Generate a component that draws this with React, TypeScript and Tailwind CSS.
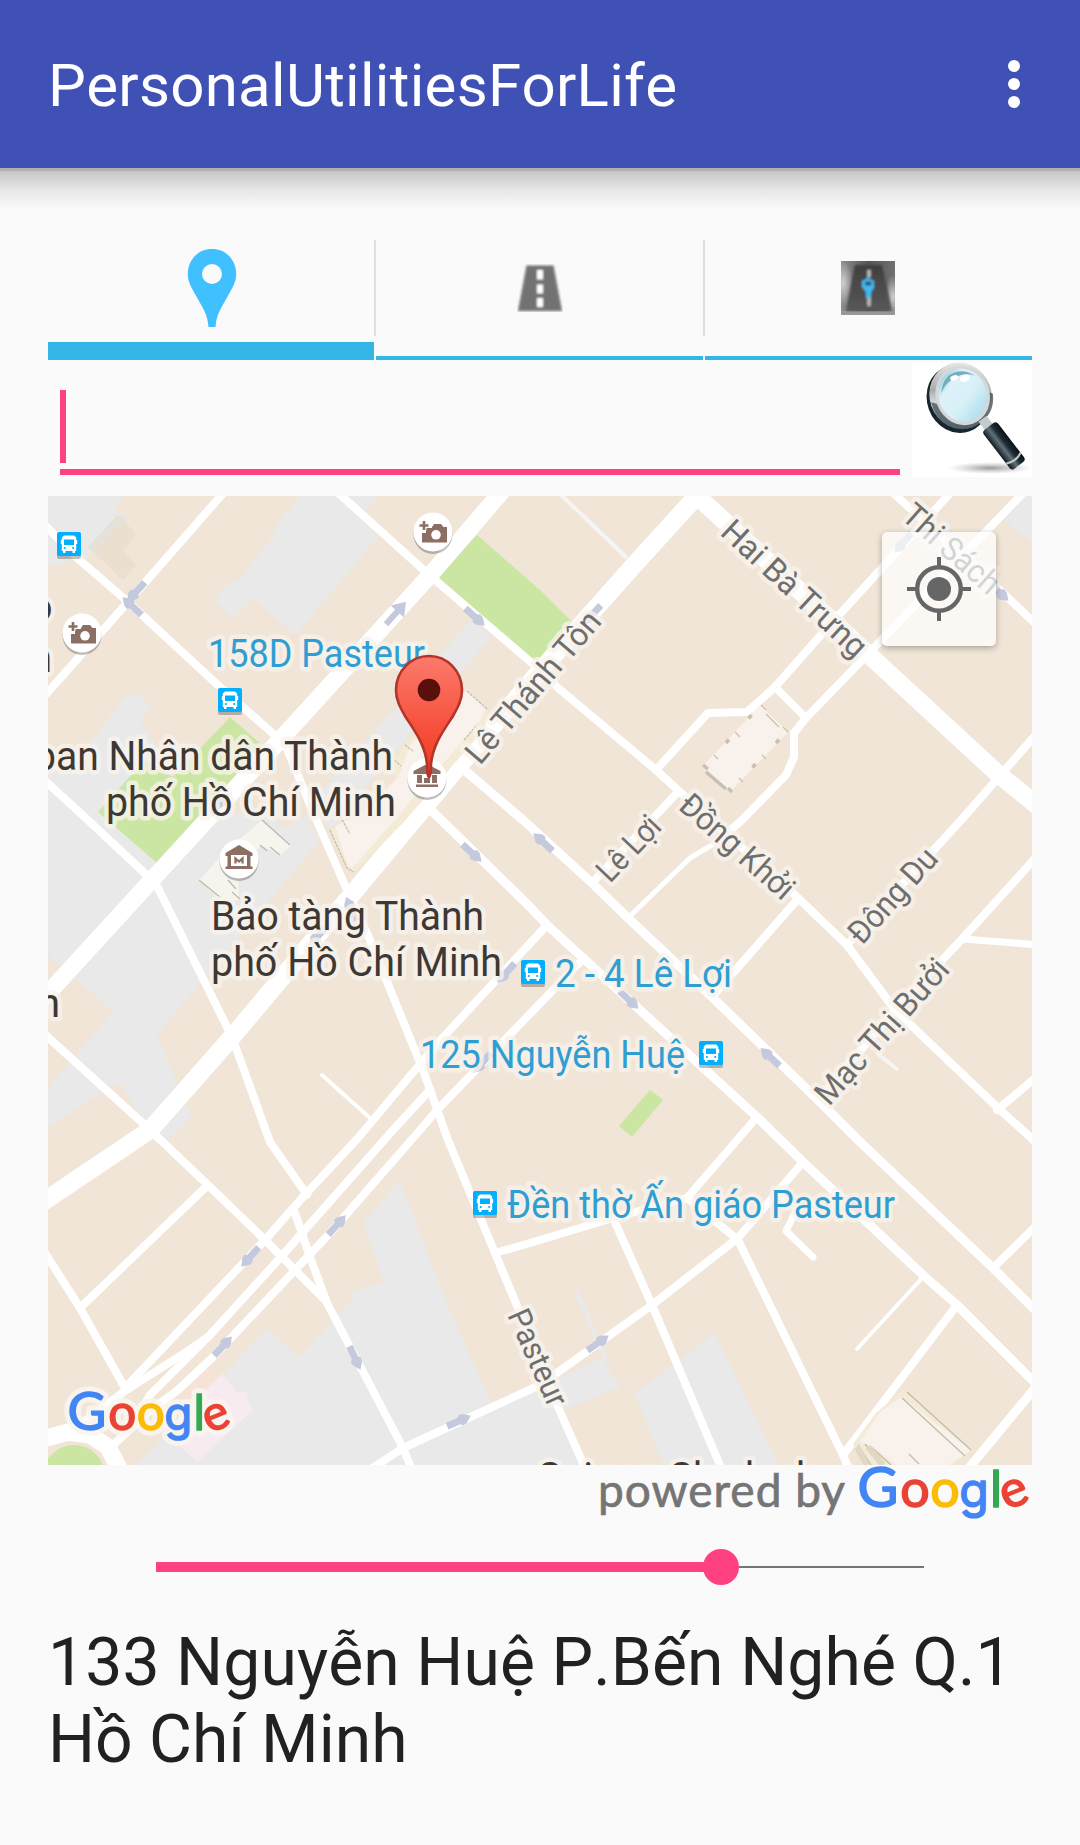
import React from "react";

const WHITE_ROADS: [number, string][] = [
  [8, "226,490 128,602 40,701"],
  [8, "40,520 75,556 128,602 220,687 278,738"],
  [8, "335,490 427,573 540,670 557,687 656,770 680,792 797,897 847,945 895,1010 997,1107 1040,1146"],
  [8, "656,770 708,713 747,712 775,687 820,636 953,490"],
  [8, "775,687 806,718"],
  [8, "1026,490 867,655 806,718 794,733 794,757 786,775 742,820 717,842"],
  [5, "717,842 690,858 628,918"],
  [8, "890,490 1003,593 1040,628"],
  [8, "1040,730 963,818 847,945"],
  [8, "1040,853 963,938 895,1010 818,1100"],
  [7, "963,939 1040,945"],
  [9, "462,768 523,820 592,883 628,918 712,997 818,1100 858,1140 993,1268 1040,1315"],
  [9, "427,806 530,907 547,925 757,1117 803,1162 923,1275 957,1305 1040,1388"],
  [8, "677,793 592,883"],
  [8, "797,900 712,997"],
  [8, "547,925 436,1045 358,1138 303,1197 265,1240 125,1388"],
  [8, "428,1092 393,1130 280,1258 208,1337 186,1352 125,1391 70,1432"],
  [8, "582,960 440,1107 420,1130 330,1233 213,1357 178,1390 147,1413 113,1445"],
  [8, "208,1337 150,1395 140,1412"],
  [8, "158,888 232,1037 270,1142 307,1195"],
  [8, "295,1213 310,1257 327,1303 403,1448 412,1470"],
  [8, "150,1130 208,1185 265,1240 325,1300"],
  [8, "208,1185 80,1308"],
  [8, "40,1245 80,1308 125,1388"],
  [8, "40,1030 147,1127"],
  [8, "40,776 90,822 152,880"],
  [8, "285,744 313,812 347,890 370,940 423,1070 448,1140 495,1253 520,1313 558,1407 586,1470"],
  [8, "495,1253 530,1243 613,1218 687,1198 757,1117"],
  [8, "687,1198 738,1240 843,1455 850,1472"],
  [8, "613,1218 652,1305 722,1470"],
  [8, "803,1162 738,1238 652,1305 540,1385 403,1448 368,1471"],
  [7, "777,1193 797,1209 786,1231 813,1257"],
  [4, "923,1277 857,1349"],
  [8, "957,1305 843,1455"],
  [9, "1040,1382 968,1469"],
  [8, "993,1268 1040,1222"],
  [8, "997,1110 1040,1074"],
  [4, "322,1075 370,1118"],
  [17, "510,482 432,573 280,740 150,882 30,1013"],
  [18, "706,486 634,565 533,679 453,773 353,893 232,1037 150,1130 40,1204"],
  [18, "682,482 867,653 997,773 1045,812"],
  [17, "40,1440 68,1432 90,1435 108,1447 120,1470"],
];

const GRAY_AREAS = [
  "48,496 123,496 115,508 122,515 88,547 92,555 48,567",
  "300,496 378,496 365,512 383,530 353,567 295,635 253,598 233,618 215,602 220,590 242,577 275,533 274,528",
  "470,620 492,636 455,680 330,830 312,800 395,708",
  "48,775 90,743 125,697 137,693 151,705 140,720 175,780 215,815 260,812 288,828 305,815 320,840 237,940 200,983 157,1034 178,1087 192,1117 162,1144 147,1127 119,1082 48,1127 48,1088 113,1012 48,955",
  "400,1180 363,1223 384,1282 348,1293 354,1298 298,1357 267,1328 223,1375 137,1465 583,1465 558,1407 535,1387 491,1403 440,1287",
  "558,1378 602,1358 620,1387 565,1410",
  "715,1333 635,1393 663,1465 778,1465",
  "1020,496 1032,496 1032,543 1001,517",
];

const GREEN_AREAS = [
  "477,535 540,590 572,622 540,658 530,658 438,577",
  "230,717 262,745 157,863 98,812 145,760 173,777",
  "650,1090 663,1100 632,1137 619,1126",
];

/* x, y, heading in degrees */
const ARROWS: [number, number, number][] = [
  [136, 592, 132],
  [132, 606, 223],
  [475, 617, 42],
  [472, 853, 42],
  [543, 842, 223],
  [318, 936, 132],
  [351, 909, 248],
  [506, 973, 132],
  [482, 1063, 132],
  [629, 1000, 43],
  [770, 1057, 223],
  [598, 1343, 325],
  [250, 1257, 132],
  [337, 1225, 312],
  [223, 1346, 313],
  [355, 1358, 65],
  [459, 1421, 336],
  [592, 615, 132],
  [903, 543, 132],
  [999, 592, 43],
  [852, 1205, 223],
  [220, 804, 312],
];

type Label = { t: string; x: number; y: number; len?: number; size?: number; rot?: number; end?: boolean };

const PLACES: Label[] = [
  { t: "ban Nhân dân Thành", x: 34, y: 770, len: 359 },
  { t: "phố Hồ Chí Minh", x: 106, y: 816, len: 290 },
  { t: "Bảo tàng Thành", x: 211, y: 930, len: 273 },
  { t: "phố Hồ Chí Minh", x: 211, y: 976, len: 291 },
  { t: "n", x: 60, y: 1017, end: true },
  { t: "o", x: 52.5, y: 621, end: true },
  { t: "n", x: 52, y: 672, end: true },
  { t: "Saigon Skydeck", x: 538, y: 1491, len: 278 },
];

const STOPS: Label[] = [
  { t: "158D Pasteur", x: 208, y: 667, len: 217 },
  { t: "2 - 4 Lê Lợi", x: 555, y: 987, len: 177 },
  { t: "125 Nguyễn Huệ", x: 420, y: 1068, len: 265 },
  { t: "Đền thờ Ấn giáo Pasteur", x: 507, y: 1218, len: 388 },
];

const STREETS: Label[] = [
  { t: "Hai Bà Trưng", x: 719, y: 534, rot: 42.7, len: 185 },
  { t: "Thi Sách", x: 900, y: 518, rot: 41.5, len: 118 },
  { t: "Lê Thánh Tôn", x: 480, y: 766, rot: -49.5, len: 189 },
  { t: "Lê Lợi", x: 610, y: 884, rot: -46.5, len: 77 },
  { t: "Đồng Khởi", x: 677, y: 808, rot: 41.5, len: 141 },
  { t: "Đông Du", x: 862, y: 946, rot: -48, len: 116 },
  { t: "Mạc Thị Bưởi", x: 829, y: 1107, rot: -48.2, len: 183 },
  { t: "Pasteur", x: 507, y: 1315, rot: 66, len: 103, size: 32 },
];

function MapLabel({ l, fill, size }: { l: Label; fill: string; size: number }) {
  return (
    <text
      x={l.x}
      y={l.y}
      fill={fill}
      fontSize={l.size ?? size}
      textLength={l.len}
      lengthAdjust="spacingAndGlyphs"
      textAnchor={l.end ? "end" : "start"}
      transform={l.rot ? `rotate(${l.rot} ${l.x} ${l.y})` : undefined}
      stroke="#f8f3ec"
      strokeOpacity={0.8}
      strokeWidth={9}
      strokeLinejoin="round"
      paintOrder="stroke"
    >
      {l.t}
    </text>
  );
}

function GoogleWord({ halo = false }: { halo?: boolean }) {
  const letters: [string, number, string, string, number, number][] = [
    ["G", 19.5, "#4285f4", "Lato", 56, 0],
    ["o", 56.5, "#ea4335", "Lato", 52, 0],
    ["o", 86.5, "#fbbc05", "Lato", 52, 0],
    ["g", 115.5, "#4285f4", "Inter", 48, 0],
    ["l", 137.5, "#34a853", "Lato", 51, 0],
    ["e", 155.5, "#ea4335", "Lato", 51, -22],
  ];
  return (
    <g textAnchor="middle">
      {(halo ? [true, false] : [false]).map((isHalo) =>
        letters.map(([c, x, color, font, size, rot], i) => (
          <text
            key={`${isHalo}${i}`}
            x={x}
            y={0}
            fontFamily={font}
            fontSize={size}
            fill={isHalo ? "#faf6f0" : color}
            stroke={isHalo ? "#faf6f0" : color}
            strokeWidth={isHalo ? 12 : 1.5}
            strokeLinejoin="round"
            opacity={isHalo ? 0.85 : 1}
            transform={rot ? `rotate(${rot} ${x} -13)` : undefined}
          >
            {c}
          </text>
        ))
      )}
    </g>
  );
}

function Bus({ x, y }: { x: number; y: number }) {
  return (
    <g transform={`translate(${x - 12} ${y - 12})`}>
      <rect y="3" width="24" height="24" rx="2" fill="#000" opacity=".25" />
      <rect width="24" height="24" rx="1.8" fill="#00b0ff" />
      <path d="M7 3.5h10l2.200 2V8h1v4h-1v7H18v2h-2.500v-2H8.500v2H6v-2H4.800v-7h-1V8h1V5.500z" fill="#fff" />
      <rect x="7" y="7.500" width="10" height="5.500" fill="#00b0ff" />
      <circle cx="7.800" cy="16" r="1.100" fill="#00b0ff" />
      <circle cx="16.200" cy="16" r="1.100" fill="#00b0ff" />
    </g>
  );
}

function Poi({ x, y, children }: { x: number; y: number; children: React.ReactNode }) {
  return (
    <g transform={`translate(${x} ${y})`}>
      <circle cy="2.500" r="19.500" fill="#000" opacity=".25" />
      <circle r="19.500" fill="#fff" />
      {children}
    </g>
  );
}

function Camera() {
  return (
    <g>
      <path d="M-1-4V-5l2-3h7l2.500 3h3.500v15.500h-25V1h4v-5z" fill="#8d6e63" />
      <path d="M-9-11v9M-13.500-6.500h9" stroke="#fff" strokeWidth="5" />
      <path d="M-9-11v9M-13.500-6.500h9" stroke="#8d6e63" strokeWidth="2.600" />
      <circle cx="3" cy="2.800" r="4.800" fill="#fff" />
    </g>
  );
}

function CityMap() {
  return (
    <svg viewBox="48 496 984 969" className="block h-[969px] w-[984px]" style={{ fontFamily: "Roboto, sans-serif" }}>
      <defs>
        <linearGradient id="marker" x1="0" y1="0" x2="0" y2="1">
          <stop offset="0" stopColor="#fc7a6c" />
          <stop offset="1" stopColor="#f2351c" />
        </linearGradient>
      </defs>
      <rect x="48" y="496" width="984" height="969" fill="#f0e5d7" />
      <g fill="#e9e9e9">
        {GRAY_AREAS.map((p) => (
          <polygon key={p} points={p} />
        ))}
      </g>
      <polygon points="118,515 136,534 123,551 136,565 123,580 88,547" fill="#ebdfcf" />
      <polygon points="122,515 126,520 93,553 88,547" fill="#e3e2da" />
      <path d="M577 1292L607 1362" stroke="#e9e9e9" strokeWidth="5" />
      <polygon points="212,1363 222,1374 196,1400 172,1402" fill="#f6e3d7" />
      <polygon points="222,1374 238,1393 246,1391 248,1400 253,1410 197,1462 180,1446 178,1418 196,1400" fill="#f8ebf0" />
      <g fill="#cbe6a3">
        {GREEN_AREAS.map((p) => (
          <polygon key={p} points={p} />
        ))}
        <ellipse cx="74" cy="1476" rx="31" ry="31" />
      </g>

      <g strokeLinejoin="round" fill="none">
        <polyline points="556,490 627,558" stroke="#f5f5f5" strokeWidth="4" />
        <polyline points="877,1053 898,1070" stroke="#f5f5f5" strokeWidth="4" />
        {WHITE_ROADS.map(([w, p]) => (
          <polyline key={p} points={p} stroke="#fff" strokeWidth={w} strokeLinecap="round" />
        ))}
      </g>

      <polygon points="262,820 291,845 281,855 261,845 238,873 239,900 221,901 199,880 227,850" fill="#f5f5ee" />
      <path d="M262 820L290 845M260 845l7 6M270 847l10 8M199 880l22 18M228 880l8 9M232 892l8 7" stroke="#bfbcae" strokeWidth="1.400" fill="none" />
      <polygon points="467,690 488,710 485,728 404,822 354,873 347,868 330,830 352,820 395,780 392,765 407,742" fill="#f3ebd6" />
      <polygon points="467,690 486,709 480,721 398,816 352,869 347,864 335,826 359,815 398,778 410,745" fill="#f9f1eb" />
      <path d="M330 830l17 38 7 4M340 816l10 18M467 691l20 18M405 745l8 6M394 760l7 6M464 740l12-14" stroke="#c4bca9" strokeWidth="1.200" fill="none" strokeDasharray="3 1" />
      <polygon points="760,705 788,732 730,792 703,766" fill="#f9f1eb" />
      <path d="M761 705l5 5M766 714l13 13M783 727l5 5M735 732l5 5M714 755l4 4M762 755l4 4M739 778l4 4" stroke="#c9c0b0" strokeWidth="1.200" />
      <path d="M748.500 718.500l3-3.500M726 743l3-3.500M776 743l3-3.500M752.500 767.500l3-3.500" stroke="#c9c0b0" strokeWidth="3.500" />
      <path d="M703 765l5 4M706 772l20 17M728 788l4 4" stroke="#c9c0b0" strokeWidth="3.500" />
      <polygon points="903,1390 972,1450 952,1465 864,1465 853,1444 876,1413" fill="#f3ebd6" />
      <polygon points="901,1397 971,1450 949,1465 896,1465 872,1446 859,1442 880,1412" fill="#f9f1eb" />
      <path d="M907 1392l64 58M902 1398l63 58M909 1454l10 10M858 1445l13 20M865 1444l17 21M871 1447l20 18" stroke="#c4bca9" strokeWidth="1.300" />
      <path d="M857 1447l10 18M868 1447l15 18" stroke="#e0d8c4" strokeWidth="6" />

      {ARROWS.map(([x, y, a]) => (
        <path
          key={`${x}-${y}`}
          d="M-13-3.500H0L2-5.500 6-5 13 0 6 5 2 5.500 0 3.500H-13z"
          fill="#c5c9de"
          transform={`translate(${x} ${y}) rotate(${a})`}
        />
      ))}
      <path d="M-15-3H2V-9L15 0 2 9V3H-15z" fill="#c5c9de" transform="translate(396 613) rotate(-48)" />

      {STREETS.map((l) => (
        <MapLabel key={l.t} l={l} fill="#6e6e6e" size={32.500} />
      ))}
      {STOPS.map((l) => (
        <MapLabel key={l.t} l={l} fill="#2f9ed2" size={38} />
      ))}
      {PLACES.map((l) => (
        <MapLabel key={`${l.t}${l.y}`} l={l} fill="#3d3833" size={40.500} />
      ))}

      <Bus x={69} y={544} />
      <Bus x={230} y={700} />
      <Bus x={533} y={972} />
      <Bus x={711} y={1053} />
      <Bus x={485} y={1203} />

      <Poi x={433} y={532}>
        <Camera />
      </Poi>
      <Poi x={82} y={633}>
        <Camera />
      </Poi>
      <Poi x={427} y={778}>
        <path d="M0-14L13.500-7v3h-27v-3zM-10-3h5V5h-5zM5-3h5V5H5zM-3 0h6v5h-6zM-11 6.500h22v2.500h-22z" fill="#8d6e63" />
      </Poi>
      <Poi x={239} y={859}>
        <path d="M0-14L13.500-6v3h-2V7.500h2V10h-27V7.500h2V-3h-2v-3zM-8-4V7H8V-4z" fillRule="evenodd" fill="#8d6e63" />
        <path d="M-3.500 4.500v-5L0 2.500l3.500-3v5" stroke="#8d6e63" strokeWidth="2.300" fill="none" />
      </Poi>

      <path
        d="M429 656c-18 0-33 15-33 34 0 10 4 17 9 26 9 14 20 28 22 48 0 8 1 13 2 13s2-5 2-13c2-20 13-34 22-48 5-9 9-16 9-26 0-19-15-34-33-34z"
        fill="url(#marker)"
        stroke="#b13529"
        strokeWidth="2.600"
      />
      <circle cx="429" cy="690" r="11.300" fill="#590f0b" />

      <g transform="translate(68.500 1429.500) scale(.95)">
        <GoogleWord halo />
      </g>
    </svg>
  );
}

function PinIcon() {
  return (
    <svg viewBox="0 0 50 78" className="ml-0.5 h-[78px] w-[50px]">
      <path fillRule="evenodd" fill="#40c0ff" d="M25 0C11 0 .8 11 .8 25c0 8 3.500 13 7.200 20C15 58 20.500 64 21.500 78h7C29.500 64 35 58 42 45c3.700-7 7.200-12 7.200-20C49.200 11 39 0 25 0zm0 15a10 10 0 110 20 10 10 0 010-20z" />
    </svg>
  );
}

function RoadIcon() {
  return (
    <svg viewBox="0 0 46 48" className="mt-1 h-[48px] w-[46px]">
      <defs>
        <filter id="roadSoft">
          <feGaussianBlur stdDeviation=".8" />
        </filter>
      </defs>
      <g filter="url(#roadSoft)">
        <path d="M9.500 1.500h27L45 47H1z" fill="#727272" stroke="#a8a8a8" strokeWidth="1" strokeLinejoin="round" />
        <path d="M23 6v9.500M23 20.500v9M23 34v9" stroke="#fff" strokeWidth="6" />
      </g>
    </svg>
  );
}

function RoadPinIcon() {
  return (
    <svg viewBox="0 0 54 54" className="mr-0.5 h-[54px] w-[54px]">
      <defs>
        <linearGradient id="tileSide" x1="0" x2="1" y1="0" y2="0">
          <stop offset="0" stopColor="#8d8d8d" />
          <stop offset=".5" stopColor="#555" />
          <stop offset="1" stopColor="#707070" />
        </linearGradient>
        <radialGradient id="tileGlow">
          <stop offset="0" stopColor="#d0d0d0" />
          <stop offset="1" stopColor="#d0d0d0" stopOpacity="0" />
        </radialGradient>
        <linearGradient id="asphalt" x1="0" x2="0" y1="0" y2="1">
          <stop offset="0" stopColor="#3f3f3f" />
          <stop offset="1" stopColor="#585858" />
        </linearGradient>
        <filter id="soften">
          <feGaussianBlur stdDeviation=".8" />
        </filter>
      </defs>
      <rect width="54" height="54" fill="url(#tileSide)" />
      <ellipse cx="2" cy="22" rx="10" ry="22" fill="url(#tileGlow)" />
      <ellipse cx="52" cy="36" rx="9" ry="22" fill="url(#tileGlow)" />
      <rect y="50" width="54" height="4" fill="#999" />
      <g filter="url(#soften)">
        <path d="M14 4h27l10 46H5z" fill="url(#asphalt)" />
        <path d="M28 9v7M28 37v8" stroke="#bbb" strokeWidth="3.500" />
        <path d="M27 15l2 3 4 2v7l-3 4v6h-5v-6l-4-5v-6l4-2z" fill="#42b8f2" />
        <rect x="24" y="20.500" width="6.500" height="4" rx="1.500" fill="#34546a" />
      </g>
    </svg>
  );
}

function MagnifierIcon() {
  return (
    <svg viewBox="0 0 120 114" className="block h-[114px] w-[120px]">
      <defs>
        <linearGradient id="rim" x1=".7" y1="0" x2=".3" y2="1">
          <stop offset="0" stopColor="#ededed" />
          <stop offset=".45" stopColor="#a9acad" />
          <stop offset=".65" stopColor="#e2e4e4" />
          <stop offset="1" stopColor="#8d9294" />
        </linearGradient>
        <linearGradient id="lens" x1=".2" y1="0" x2=".8" y2="1">
          <stop offset="0" stopColor="#8fc9dc" />
          <stop offset=".25" stopColor="#def2f8" />
          <stop offset=".6" stopColor="#d7f0f8" />
          <stop offset="1" stopColor="#a9dcea" />
        </linearGradient>
        <linearGradient id="handle" x1="0" x2="1" y1="0" y2="0">
          <stop offset="0" stopColor="#111a20" />
          <stop offset=".4" stopColor="#5f717b" />
          <stop offset=".65" stopColor="#1e2b32" />
          <stop offset="1" stopColor="#0c1216" />
        </linearGradient>
        <radialGradient id="cast">
          <stop offset="0" stopColor="#444" stopOpacity=".55" />
          <stop offset="1" stopColor="#888" stopOpacity="0" />
        </radialGradient>
      </defs>
      <rect width="120" height="114" fill="#fff" />
      <ellipse cx="78" cy="105" rx="42" ry="6" fill="url(#cast)" />
      <g transform="rotate(-20 48 34)">
        <ellipse cx="45.500" cy="35" rx="31" ry="34.500" fill="#16262e" />
        <ellipse cx="49" cy="33" rx="31" ry="33.500" fill="url(#rim)" />
        <path d="M19 29C17 50 30 66 49 67 67 66 77 56 80 42l-5-4C73 54 61 61 49 60 35 59 25 50 25 33z" fill="#3c4c54" opacity=".75" />
        <ellipse cx="51" cy="33.500" rx="27" ry="30" fill="#d5d7d8" />
        <ellipse cx="51" cy="33" rx="24" ry="27" fill="url(#lens)" />
        <path d="M32 24C36 14 43 9 51 9s15 5 18 10c-6-5-12-6-18-5-8 1-14 4-19 10z" fill="#5f9eb2" opacity=".8" />
        <ellipse cx="49" cy="14" rx="4" ry="2.500" fill="#fff" />
        <ellipse cx="59" cy="18" rx="5" ry="3.500" fill="#fff" />
      </g>
      <g transform="translate(73 59) rotate(-37.500)">
        <rect x="-5" y="-4" width="10" height="11" fill="#c5cacc" />
        <rect x="-8.500" y="6" width="18" height="49" rx="3.500" fill="url(#handle)" />
        <path d="M-8.500 46c5 3 13 3 18 0" stroke="#c2c8ca" strokeWidth="2.200" fill="none" />
      </g>
    </svg>
  );
}

export default function App() {
  const progress = 565 / 768;
  return (
    <div className="flex h-[1845px] w-[1080px] flex-col overflow-hidden bg-[#fafafa] font-[Roboto,sans-serif]">
      <header className="flex h-[168px] shrink-0 items-center justify-between bg-[#3f51b5] pr-[60px] pl-12">
        <h1 className="pt-1 text-[60px] leading-[70px] tracking-[0.3px] text-white [font-kerning:none]">
          PersonalUtilitiesForLife
        </h1>
        <div className="flex flex-col gap-1.5">
          <span className="size-3 rounded-full bg-white" />
          <span className="size-3 rounded-full bg-white" />
          <span className="size-3 rounded-full bg-white" />
        </div>
      </header>
      <div className="h-[3px] shrink-0 bg-[#b0b0b0]" />
      <div className="h-[37px] shrink-0 bg-linear-to-b from-[#c6c6c6] via-[#e6e6e6] to-[#fafafa]" />

      <main className="px-12 pt-[8px]">
        <nav className="flex h-[144px]">
          <div className="flex w-[326px] flex-col border-b-[18px] border-[#33b5e5]">
            <div className="flex h-[126px] items-center justify-center pt-[18px]">
              <PinIcon />
            </div>
          </div>
          <div className="mt-6 h-24 w-0.5 bg-[#dedede]" />
          <div className="flex h-[144px] w-[327px] items-start justify-center border-b-4 border-[#33b5e5] pt-[44px]">
            <RoadIcon />
          </div>
          <div className="mt-6 h-24 w-0.5 bg-[#dedede]" />
          <div className="flex h-[144px] w-[327px] items-start justify-center border-b-4 border-[#33b5e5] pt-[45px]">
            <RoadPinIcon />
          </div>
        </nav>

        <div className="flex h-[136px] pt-[3px]">
          <div className="ml-3 flex h-[112px] w-[840px] items-end border-b-[6px] border-[#ff4081] pb-[6px]">
            <span className="h-[73px] w-[6px] bg-[#ff4081]" />
          </div>
          <button className="ml-3 h-[114px] w-[120px]">
            <MagnifierIcon />
          </button>
        </div>

        <section className="relative h-[969px] overflow-hidden">
          <CityMap />
          <button className="absolute top-9 right-9 flex size-[114px] items-center justify-center rounded-[5px] bg-white/70 shadow-[0_2px_6px_rgba(0,0,0,0.3)]">
            <svg viewBox="0 0 64 64" className="size-16">
              <circle cx="32" cy="32" r="21.800" fill="none" stroke="#666" strokeWidth="4.400" />
              <circle cx="32" cy="32" r="12" fill="#666" />
              <path d="M32 0v9M32 55v9M0 32h9M55 32h9" stroke="#666" strokeWidth="4" />
            </svg>
          </button>
        </section>

        <div className="flex h-[60px] justify-end">
          <svg viewBox="596 1465 436 60" className="h-[60px] w-[436px]">
            <text x="598" y="1506.500" fontFamily="Lato" fontSize="46" fill="#757575" stroke="#757575" strokeWidth=".7" textLength="247">
              powered by
            </text>
            <g transform="translate(858.500 1506.500)">
              <GoogleWord />
            </g>
          </svg>
        </div>

        <div className="mx-[108px] mt-6 flex h-9 items-center">
          <div className="h-2.5 bg-[#ff4081]" style={{ width: `${progress * 100}%` }} />
          <div className="-ml-[18px] size-9 shrink-0 rounded-full bg-[#ff4081]" />
          <div className="h-0.5 grow bg-[#757575]" />
        </div>

        <p className="mt-[39px] text-[66px] leading-[77px] whitespace-nowrap text-[#212121] [font-kerning:none]">
          <span className="tracking-[0.1px]">133 Nguyễn Huệ P.Bến Nghé Q.1</span>
          <br />
          Hồ Chí Minh
        </p>
      </main>
    </div>
  );
}
